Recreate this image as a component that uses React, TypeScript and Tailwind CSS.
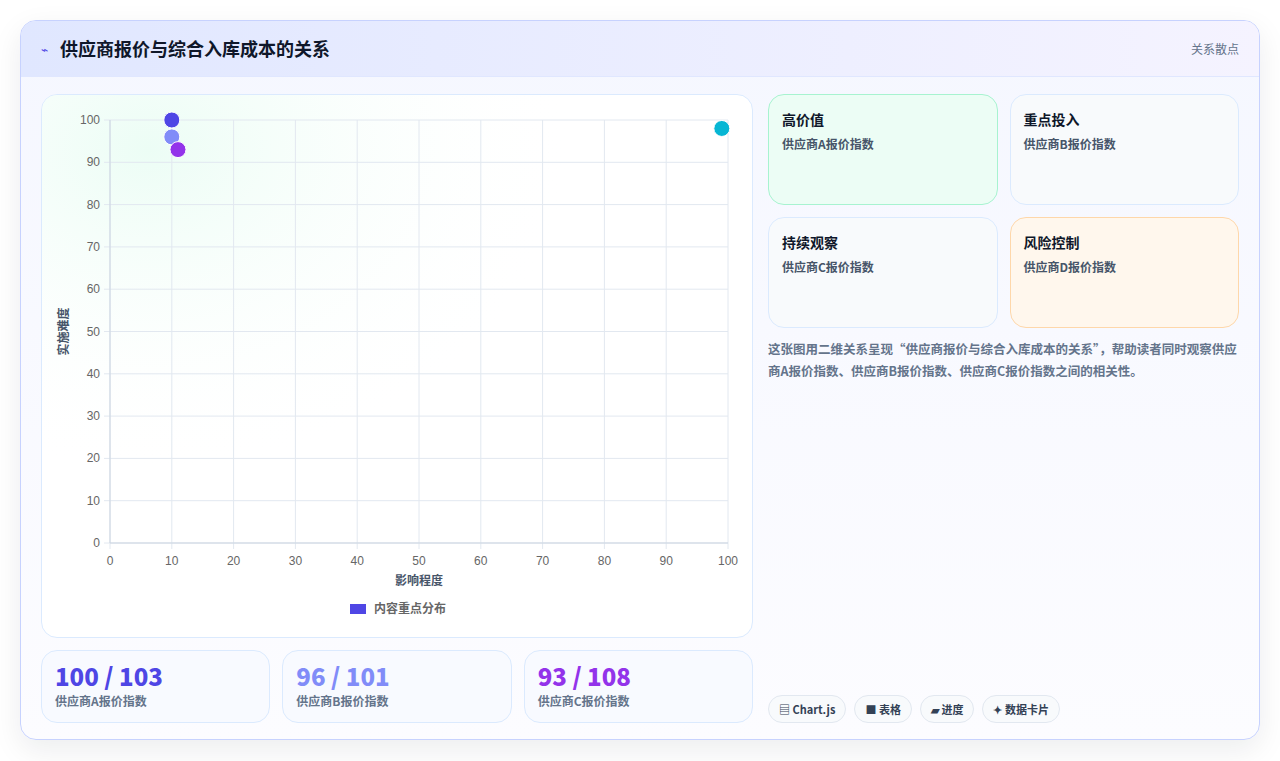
import React from 'react';

const font = { fontFamily: '"Noto Sans CJK SC", "Noto Sans", sans-serif' };

const points = [
  { x: 10, y: 100, c: '#4f46e5' },
  { x: 10, y: 96, c: '#818cf8' },
  { x: 11, y: 93, c: '#9333ea' },
  { x: 99, y: 98, c: '#06b6d4' },
];

const Chart: React.FC = () => {
  const L = 68, R = 686, T = 25, B = 448;
  const px = (v: number) => L + ((R - L) * v) / 100;
  const py = (v: number) => B - ((B - T) * v) / 100;
  const ticks = [0, 10, 20, 30, 40, 50, 60, 70, 80, 90, 100];
  return (
    <svg width="712" height="544" className="absolute inset-0" style={font}>
      <defs>
        <radialGradient id="glow" cx="0.15" cy="0.1" r="0.6">
          <stop offset="0" stopColor="#ecfdf5" />
          <stop offset="1" stopColor="#ffffff" stopOpacity="0" />
        </radialGradient>
      </defs>
      <rect x="0" y="0" width="712" height="544" fill="url(#glow)" />
      {ticks.map((t) => (
        <g key={t}>
          <line x1={px(t)} x2={px(t)} y1={T} y2={B + 6} stroke="#e2e8f0" />
          <line x1={L - 6} x2={R} y1={py(t)} y2={py(t)} stroke="#e2e8f0" />
          <text x={px(t)} y={B + 22} fontSize="12" fill="#666" textAnchor="middle" fontFamily="Liberation Sans, sans-serif">{t}</text>
          <text x={L - 10} y={py(t) + 4} fontSize="12" fill="#666" textAnchor="end" fontFamily="Liberation Sans, sans-serif">{t}</text>
        </g>
      ))}
      <line x1={L} x2={R} y1={B} y2={B} stroke="#cbd5e1" />
      <line x1={L} x2={L} y1={T} y2={B} stroke="#cbd5e1" />
      <text x={(L + R) / 2} y={B + 42} fontSize="12" fontWeight="700" fill="#475569" textAnchor="middle">影响程度</text>
      <text transform={`translate(26 ${(T + B) / 2}) rotate(-90)`} fontSize="12" fontWeight="700" fill="#475569" textAnchor="middle">实施难度</text>
      <rect x="308" y="509" width="16" height="10" fill="#4f46e5" />
      <text x="332" y="518" fontSize="12" fontWeight="700" fill="#666">内容重点分布</text>
      {points.map((p, i) => (
        <circle key={i} cx={px(p.x)} cy={py(p.y)} r="8" fill={p.c} stroke="#fff" strokeWidth="1" />
      ))}
    </svg>
  );
};

const stats = [
  { v: '100 / 103', l: '供应商A报价指数', c: 'text-[#4f46e5]' },
  { v: '96 / 101', l: '供应商B报价指数', c: 'text-[#818cf8]' },
  { v: '93 / 108', l: '供应商C报价指数', c: 'text-[#9333ea]' },
];

const quads = [
  { t: '高价值', s: '供应商A报价指数', cls: 'bg-[#ecfdf5] border-[#a7f3d0]' },
  { t: '重点投入', s: '供应商B报价指数', cls: 'bg-[#f8fafc] border-[#dbeafe]' },
  { t: '持续观察', s: '供应商C报价指数', cls: 'bg-[#f8fafc] border-[#dbeafe]' },
  { t: '风险控制', s: '供应商D报价指数', cls: 'bg-[#fff7ed] border-[#fed7aa]' },
];

const chips = ['▤ Chart.js', '■ 表格', '▰ 进度', '✦ 数据卡片'];

export default function App() {
  return (
    <div className="w-[1280px] h-[761px] bg-white pt-5 px-5" style={font}>
      <div className="h-[720px] rounded-2xl border border-[#c7d2fe] overflow-hidden shadow-[0_10px_30px_rgba(15,23,42,0.08)] bg-gradient-to-b from-[#f5f7ff] to-[#fcfcff] flex flex-col">
        <div className="h-[56px] shrink-0 flex items-center justify-between px-5 bg-gradient-to-r from-[#e0e7ff] to-[#f5f3ff] border-b border-[#e0e7ff]">
          <div className="flex items-center gap-3">
            <span className="text-[#4f46e5] text-xs">⌁</span>
            <span className="text-[18px] font-bold text-[#0f172a]">供应商报价与综合入库成本的关系</span>
          </div>
          <span className="text-xs text-[#64748b]">关系散点</span>
        </div>
        <div className="flex-1 flex gap-[15px] px-5 pt-[17px] pb-[19px]">
          <div className="w-[712px] flex flex-col gap-3">
            <div className="relative h-[544px] rounded-2xl border border-[#dbeafe] bg-white overflow-hidden">
              <Chart />
            </div>
            <div className="flex gap-3">
              {stats.map((s) => (
                <div key={s.l} className="flex-1 h-[73px] rounded-2xl border border-[#dbeafe] bg-[#f8faff] px-[13px] pt-[10px]">
                  <div className={`text-[24px] font-extrabold leading-[30px] ${s.c}`}>{s.v}</div>
                  <div className="text-xs font-bold text-[#64748b] mt-[2px]">{s.l}</div>
                </div>
              ))}
            </div>
          </div>
          <div className="flex-1 flex flex-col">
            <div className="grid grid-cols-2 gap-3">
              {quads.map((q) => (
                <div key={q.t} className={`h-[111px] rounded-2xl border px-[13px] pt-[14px] ${q.cls}`}>
                  <div className="text-sm font-bold text-[#0f172a]">{q.t}</div>
                  <div className="text-xs font-bold text-[#475569] mt-[7px]">{q.s}</div>
                </div>
              ))}
            </div>
            <p className="mt-[10px] text-[12.5px] font-bold text-[#64748b] leading-[22px]">
              这张图用二维关系呈现“供应商报价与综合入库成本的关系”，帮助读者同时观察供应商A报价指数、供应商B报价指数、供应商C报价指数之间的相关性。
            </p>
            <div className="mt-auto flex gap-2">
              {chips.map((c) => (
                <span key={c} className="h-[28px] px-[10px] flex items-center rounded-full border border-[#e2e8f0] bg-[#f8fafc] text-[11px] font-bold text-[#334155]">{c}</span>
              ))}
            </div>
          </div>
        </div>
      </div>
    </div>
  );
}
